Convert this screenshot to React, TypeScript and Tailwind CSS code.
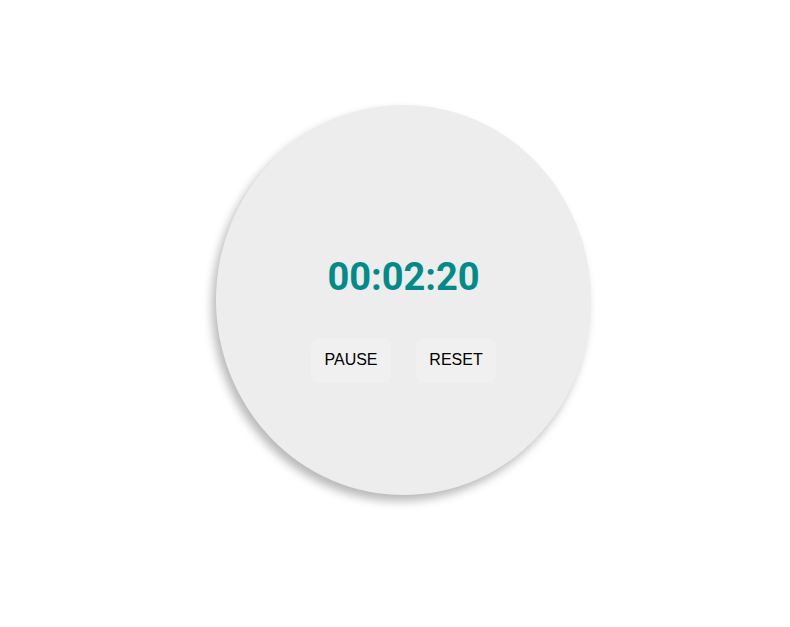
export default function App() {
  return (
    <div className="min-h-[627px] w-full bg-white pl-[216px] pt-[105px]">
      <div className="flex h-[390px] w-[375px] flex-col items-center justify-center rounded-[50%] bg-[#ededed] shadow-[-4px_6px_10px_rgba(0,0,0,0.28)]">
        <div className="mt-[40px] font-['Roboto',sans-serif] text-[38px] leading-none font-bold text-[#008b8b]">
          00:02:20
        </div>
        <div className="mt-[42px] flex gap-[25px] font-['Liberation_Sans',Arial,sans-serif] text-base text-black">
          <button className="h-[45px] w-[80px] rounded-lg bg-[#f0f0f0]">PAUSE</button>
          <button className="h-[45px] w-[80px] rounded-lg bg-[#f0f0f0]">RESET</button>
        </div>
      </div>
    </div>
  )
}
